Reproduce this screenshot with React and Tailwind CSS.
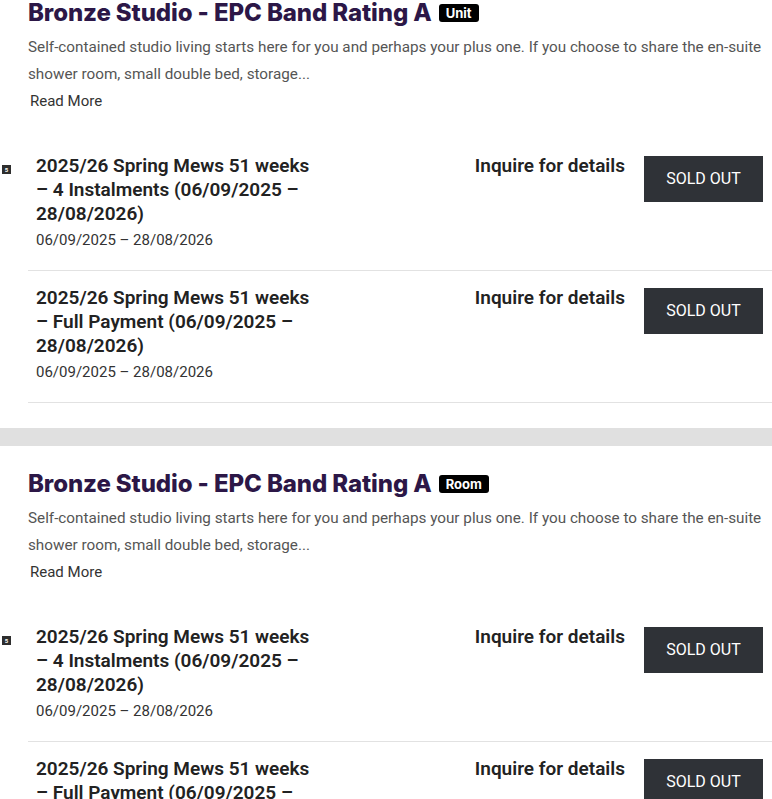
const ROWS = [
  { title: '2025/26 Spring Mews 51 weeks – 4 Instalments (06/09/2025 – 28/08/2026)', badge: true },
  { title: '2025/26 Spring Mews 51 weeks – Full Payment (06/09/2025 – 28/08/2026)', badge: false },
]

function Row({ title, badge }) {
  return (
    <div className="relative">
      {badge && (
        <span className="absolute left-[2px] top-[11px] w-[9px] h-[9px] bg-[#2e2e2e] text-white text-[6px] leading-[9px] text-center font-bold">
          5
        </span>
      )}
      <div className="ml-[28px] border-b border-[#e2e2e2] pl-2 pb-[19px] flex items-start">
        <div className="w-[290px]">
          <h3 className="text-[19px] leading-[24px] font-semibold text-[#222]">{title}</h3>
          <p className="text-[15px] leading-[22px] text-[#333] mt-[3px]">06/09/2025 – 28/08/2026</p>
        </div>
        <div className="flex-1" />
        <div className="text-[19px] leading-[24px] font-semibold text-[#222]">Inquire for details</div>
        <button className="ml-[19px] mr-[9px] mt-[2px] w-[119px] h-[46px] bg-[#2f3237] text-white text-[16px] uppercase shrink-0">
          Sold Out
        </button>
      </div>
    </div>
  )
}

function Section({ tag, first }) {
  return (
    <section className={first ? '-mt-[3px]' : 'pt-[22px]'}>
      <div className="pl-[28px] pr-[4px]">
        <h2 className="flex items-center gap-[7px] text-[24px] leading-[32px] font-extrabold text-[#2c1747] tracking-[-0.1px]" style={{ fontFamily: 'Inter, sans-serif' }}>
          Bronze Studio - EPC Band Rating A
          <span className="inline-block bg-black text-white text-[13px] leading-[18px] font-bold px-[7px] rounded-[3px] tracking-normal">
            {tag}
          </span>
        </h2>
        <p className="mt-[5px] text-[15.25px] leading-[27px] text-[#555]">
          Self‑contained studio living starts here for you and perhaps your plus one. If you choose to share the en‑suite shower room, small double bed, storage...
        </p>
        <a className="block text-[15px] leading-[26px] text-[#333] pl-[2px]">Read More</a>
      </div>
      <div className="mt-[40px]">
        {ROWS.map((r, i) => (
          <div key={i} className={i > 0 ? 'pt-[15px]' : ''}>
            <Row {...r} />
          </div>
        ))}
      </div>
    </section>
  )
}

export default function App() {
  return (
    <div className="w-[772px] h-[799px] overflow-hidden bg-white" style={{ fontFamily: 'Roboto, "Liberation Sans", sans-serif' }}>
      <Section tag="Unit" first />
      <div className="mt-[25px] h-[18px] bg-[#e0e0e0]" />
      <Section tag="Room" />
    </div>
  )
}
